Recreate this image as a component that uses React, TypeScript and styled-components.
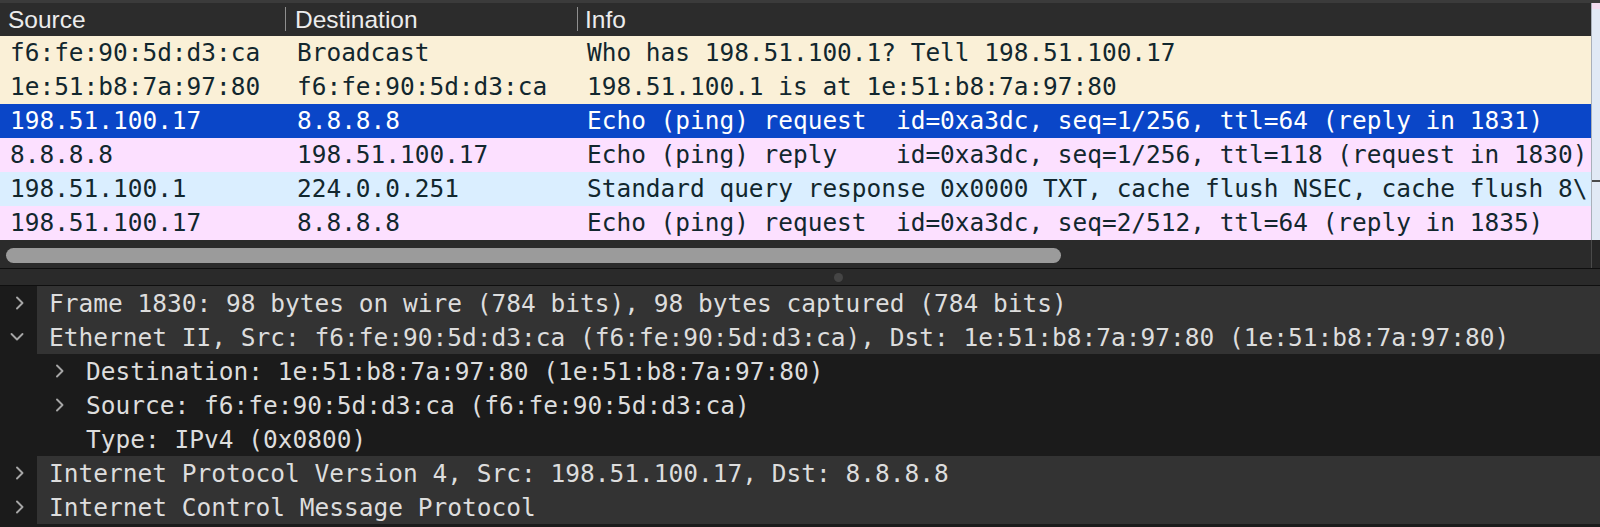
import React, { FC } from "react";
import styled, { createGlobalStyle } from "styled-components";

type Kind = "arp" | "icmp" | "udp" | "selected";

interface IPacket {
  src: string;
  dst: string;
  info: string;
  kind: Kind;
}

interface INode {
  depth: number;
  arrow: "right" | "down" | null;
  text: string;
}

const rowColors: Record<Kind, { bg: string; fg: string }> = {
  arp: { bg: "#faf0d7", fg: "#12272e" },
  icmp: { bg: "#fce0ff", fg: "#12272e" },
  udp: { bg: "#daeeff", fg: "#12272e" },
  selected: { bg: "#0a46c8", fg: "#ffffff" },
};

const packets: IPacket[] = [
  {
    src: "f6:fe:90:5d:d3:ca",
    dst: "Broadcast",
    info: "Who has 198.51.100.1? Tell 198.51.100.17",
    kind: "arp",
  },
  {
    src: "1e:51:b8:7a:97:80",
    dst: "f6:fe:90:5d:d3:ca",
    info: "198.51.100.1 is at 1e:51:b8:7a:97:80",
    kind: "arp",
  },
  {
    src: "198.51.100.17",
    dst: "8.8.8.8",
    info: "Echo (ping) request  id=0xa3dc, seq=1/256, ttl=64 (reply in 1831)",
    kind: "selected",
  },
  {
    src: "8.8.8.8",
    dst: "198.51.100.17",
    info: "Echo (ping) reply    id=0xa3dc, seq=1/256, ttl=118 (request in 1830)",
    kind: "icmp",
  },
  {
    src: "198.51.100.1",
    dst: "224.0.0.251",
    info: "Standard query response 0x0000 TXT, cache flush NSEC, cache flush 8\\",
    kind: "udp",
  },
  {
    src: "198.51.100.17",
    dst: "8.8.8.8",
    info: "Echo (ping) request  id=0xa3dc, seq=2/512, ttl=64 (reply in 1835)",
    kind: "icmp",
  },
];

const tree: INode[] = [
  {
    depth: 0,
    arrow: "right",
    text: "Frame 1830: 98 bytes on wire (784 bits), 98 bytes captured (784 bits)",
  },
  {
    depth: 0,
    arrow: "down",
    text: "Ethernet II, Src: f6:fe:90:5d:d3:ca (f6:fe:90:5d:d3:ca), Dst: 1e:51:b8:7a:97:80 (1e:51:b8:7a:97:80)",
  },
  { depth: 1, arrow: "right", text: "Destination: 1e:51:b8:7a:97:80 (1e:51:b8:7a:97:80)" },
  { depth: 1, arrow: "right", text: "Source: f6:fe:90:5d:d3:ca (f6:fe:90:5d:d3:ca)" },
  { depth: 1, arrow: null, text: "Type: IPv4 (0x0800)" },
  {
    depth: 0,
    arrow: "right",
    text: "Internet Protocol Version 4, Src: 198.51.100.17, Dst: 8.8.8.8",
  },
  { depth: 0, arrow: "right", text: "Internet Control Message Protocol" },
];

const Arrow: FC<{ dir: "right" | "down" | null }> = ({ dir }) => {
  if (dir === "down") {
    return (
      <svg width="14" height="10" viewBox="0 0 14 10">
        <polyline
          points="1.5,2 7,7.5 12.5,2"
          fill="none"
          stroke="#a6a6a6"
          strokeWidth="1.9"
          strokeLinecap="round"
          strokeLinejoin="round"
        />
      </svg>
    );
  }
  return (
    <svg width="10" height="14" viewBox="0 0 10 14" style={{ visibility: dir ? "visible" : "hidden" }}>
      <polyline
        points="2,1.5 7.5,7 2,12.5"
        fill="none"
        stroke="#a6a6a6"
        strokeWidth="1.9"
        strokeLinecap="round"
        strokeLinejoin="round"
      />
    </svg>
  );
};

export default function App() {
  return (
    <>
      <GlobalStyle />
      <Shell>
        <TopPane>
          <ListArea>
            <HeaderBar>
              <HeaderCell $pad={8}>Source</HeaderCell>
              <HeaderCell $pad={10} $sep>
                Destination
              </HeaderCell>
              <HeaderCell $pad={8} $sep>
                Info
              </HeaderCell>
            </HeaderBar>
            {packets.map((p, idx) => (
              <PacketRow key={idx} $kind={p.kind}>
                <Cell $pad={10}>{p.src}</Cell>
                <Cell $pad={12}>{p.dst}</Cell>
                <Cell $pad={10}>{p.info}</Cell>
              </PacketRow>
            ))}
          </ListArea>
          <Minimap />
        </TopPane>
        <HScrollRow>
          <Track>
            <Thumb />
          </Track>
          <Corner />
        </HScrollRow>
        <Splitter>
          <Grip />
        </Splitter>
        <TreePane>
          {tree.map((n, idx) => (
            <TreeRow key={idx}>
              <Gutter $down={n.arrow === "down"}>
                {n.depth === 0 && <Arrow dir={n.arrow} />}
              </Gutter>
              <TreeBody $top={n.depth === 0}>
                {n.depth > 0 && (
                  <ChildArrow>
                    <Arrow dir={n.arrow} />
                  </ChildArrow>
                )}
                <TreeText>{n.text}</TreeText>
              </TreeBody>
            </TreeRow>
          ))}
        </TreePane>
      </Shell>
    </>
  );
}

const GlobalStyle = createGlobalStyle`
  html, body {
    margin: 0;
    padding: 0;
    background: #1b1b1b;
    overflow: hidden;
  }
`;

const mono = `"DejaVu Sans Mono", "Liberation Mono", monospace`;

const Shell = styled.div`
  width: 1600px;
  height: 527px;
  display: flex;
  flex-direction: column;
  background: #1b1b1b;
  overflow: hidden;
`;

const TopPane = styled.div`
  display: flex;
  height: 240px;
  border-top: 3px solid #3b3b3b;
  box-sizing: border-box;
`;

const ListArea = styled.div`
  flex: 1;
  min-width: 0;
  display: flex;
  flex-direction: column;
  overflow: hidden;
`;

const columns = `285px 292px minmax(0, 1fr)`;

const HeaderBar = styled.div`
  display: grid;
  grid-template-columns: ${columns};
  height: 33px;
  background: #2c2c2c;
  flex-shrink: 0;
`;

const HeaderCell = styled.div<{ $pad: number; $sep?: boolean }>`
  position: relative;
  padding-left: ${(p) => p.$pad}px;
  line-height: 33px;
  font-family: "Liberation Sans", Arial, sans-serif;
  font-size: 24.5px;
  color: #ececec;
  white-space: nowrap;
  &::before {
    content: "";
    display: ${(p) => (p.$sep ? "block" : "none")};
    position: absolute;
    left: 0;
    top: 4px;
    bottom: 5px;
    width: 1px;
    background: #8e8e8e;
  }
`;

const PacketRow = styled.div<{ $kind: Kind }>`
  display: grid;
  grid-template-columns: ${columns};
  height: 34px;
  flex-shrink: 0;
  background: ${(p) => rowColors[p.$kind].bg};
  color: ${(p) => rowColors[p.$kind].fg};
  font-family: ${mono};
  font-size: 24.45px;
  line-height: 33px;
`;

const Cell = styled.div<{ $pad: number }>`
  padding-left: ${(p) => p.$pad}px;
  white-space: pre;
  overflow: hidden;
`;

const Minimap = styled.div`
  width: 8px;
  flex-shrink: 0;
  border-left: 1px solid #a9b0ba;
  background: linear-gradient(
    to bottom,
    #f2dcef 0px,
    #f2dcef 6px,
    #e1e9f5 6px,
    #e1e9f5 177px,
    #4a4a4a 177px,
    #4a4a4a 179px,
    #e1e9f5 179px
  );
`;

const HScrollRow = styled.div`
  display: flex;
  height: 28px;
  flex-shrink: 0;
`;

const Track = styled.div`
  flex: 1;
  background: #2b2b2b;
  padding: 8px 0 0 6px;
  box-sizing: border-box;
`;

const Thumb = styled.div`
  width: 1055px;
  height: 15px;
  border-radius: 8px;
  background: #9b9b9b;
`;

const Corner = styled.div`
  width: 8px;
  background: #262626;
  border-left: 1px solid #4a4a4a;
`;

const Splitter = styled.div`
  height: 16px;
  flex-shrink: 0;
  display: flex;
  align-items: center;
  padding-left: 834px;
  background: #2a2a2a;
  border-top: 1px solid #0f0f0f;
  border-bottom: 1px solid #0f0f0f;
`;

const Grip = styled.div`
  width: 9px;
  height: 9px;
  border-radius: 50%;
  background: #454545;
`;

const TreePane = styled.div`
  display: flex;
  flex-direction: column;
  background: #1b1b1b;
`;

const TreeRow = styled.div`
  display: flex;
  height: 34px;
`;

const Gutter = styled.div<{ $down: boolean }>`
  width: 37px;
  flex-shrink: 0;
  display: flex;
  align-items: center;
  padding-left: ${(p) => (p.$down ? 10 : 15)}px;
  box-sizing: border-box;
`;

const TreeBody = styled.div<{ $top: boolean }>`
  flex: 1;
  min-width: 0;
  display: flex;
  align-items: center;
  padding-left: ${(p) => (p.$top ? 12 : 18)}px;
  background: ${(p) => (p.$top ? "#333333" : "transparent")};
`;

const ChildArrow = styled.div`
  width: 10px;
  margin-right: 21px;
  display: flex;
  align-items: center;
`;

const TreeText = styled.span`
  font-family: ${mono};
  font-size: 24.5px;
  color: #dddddd;
  white-space: pre;
`;
